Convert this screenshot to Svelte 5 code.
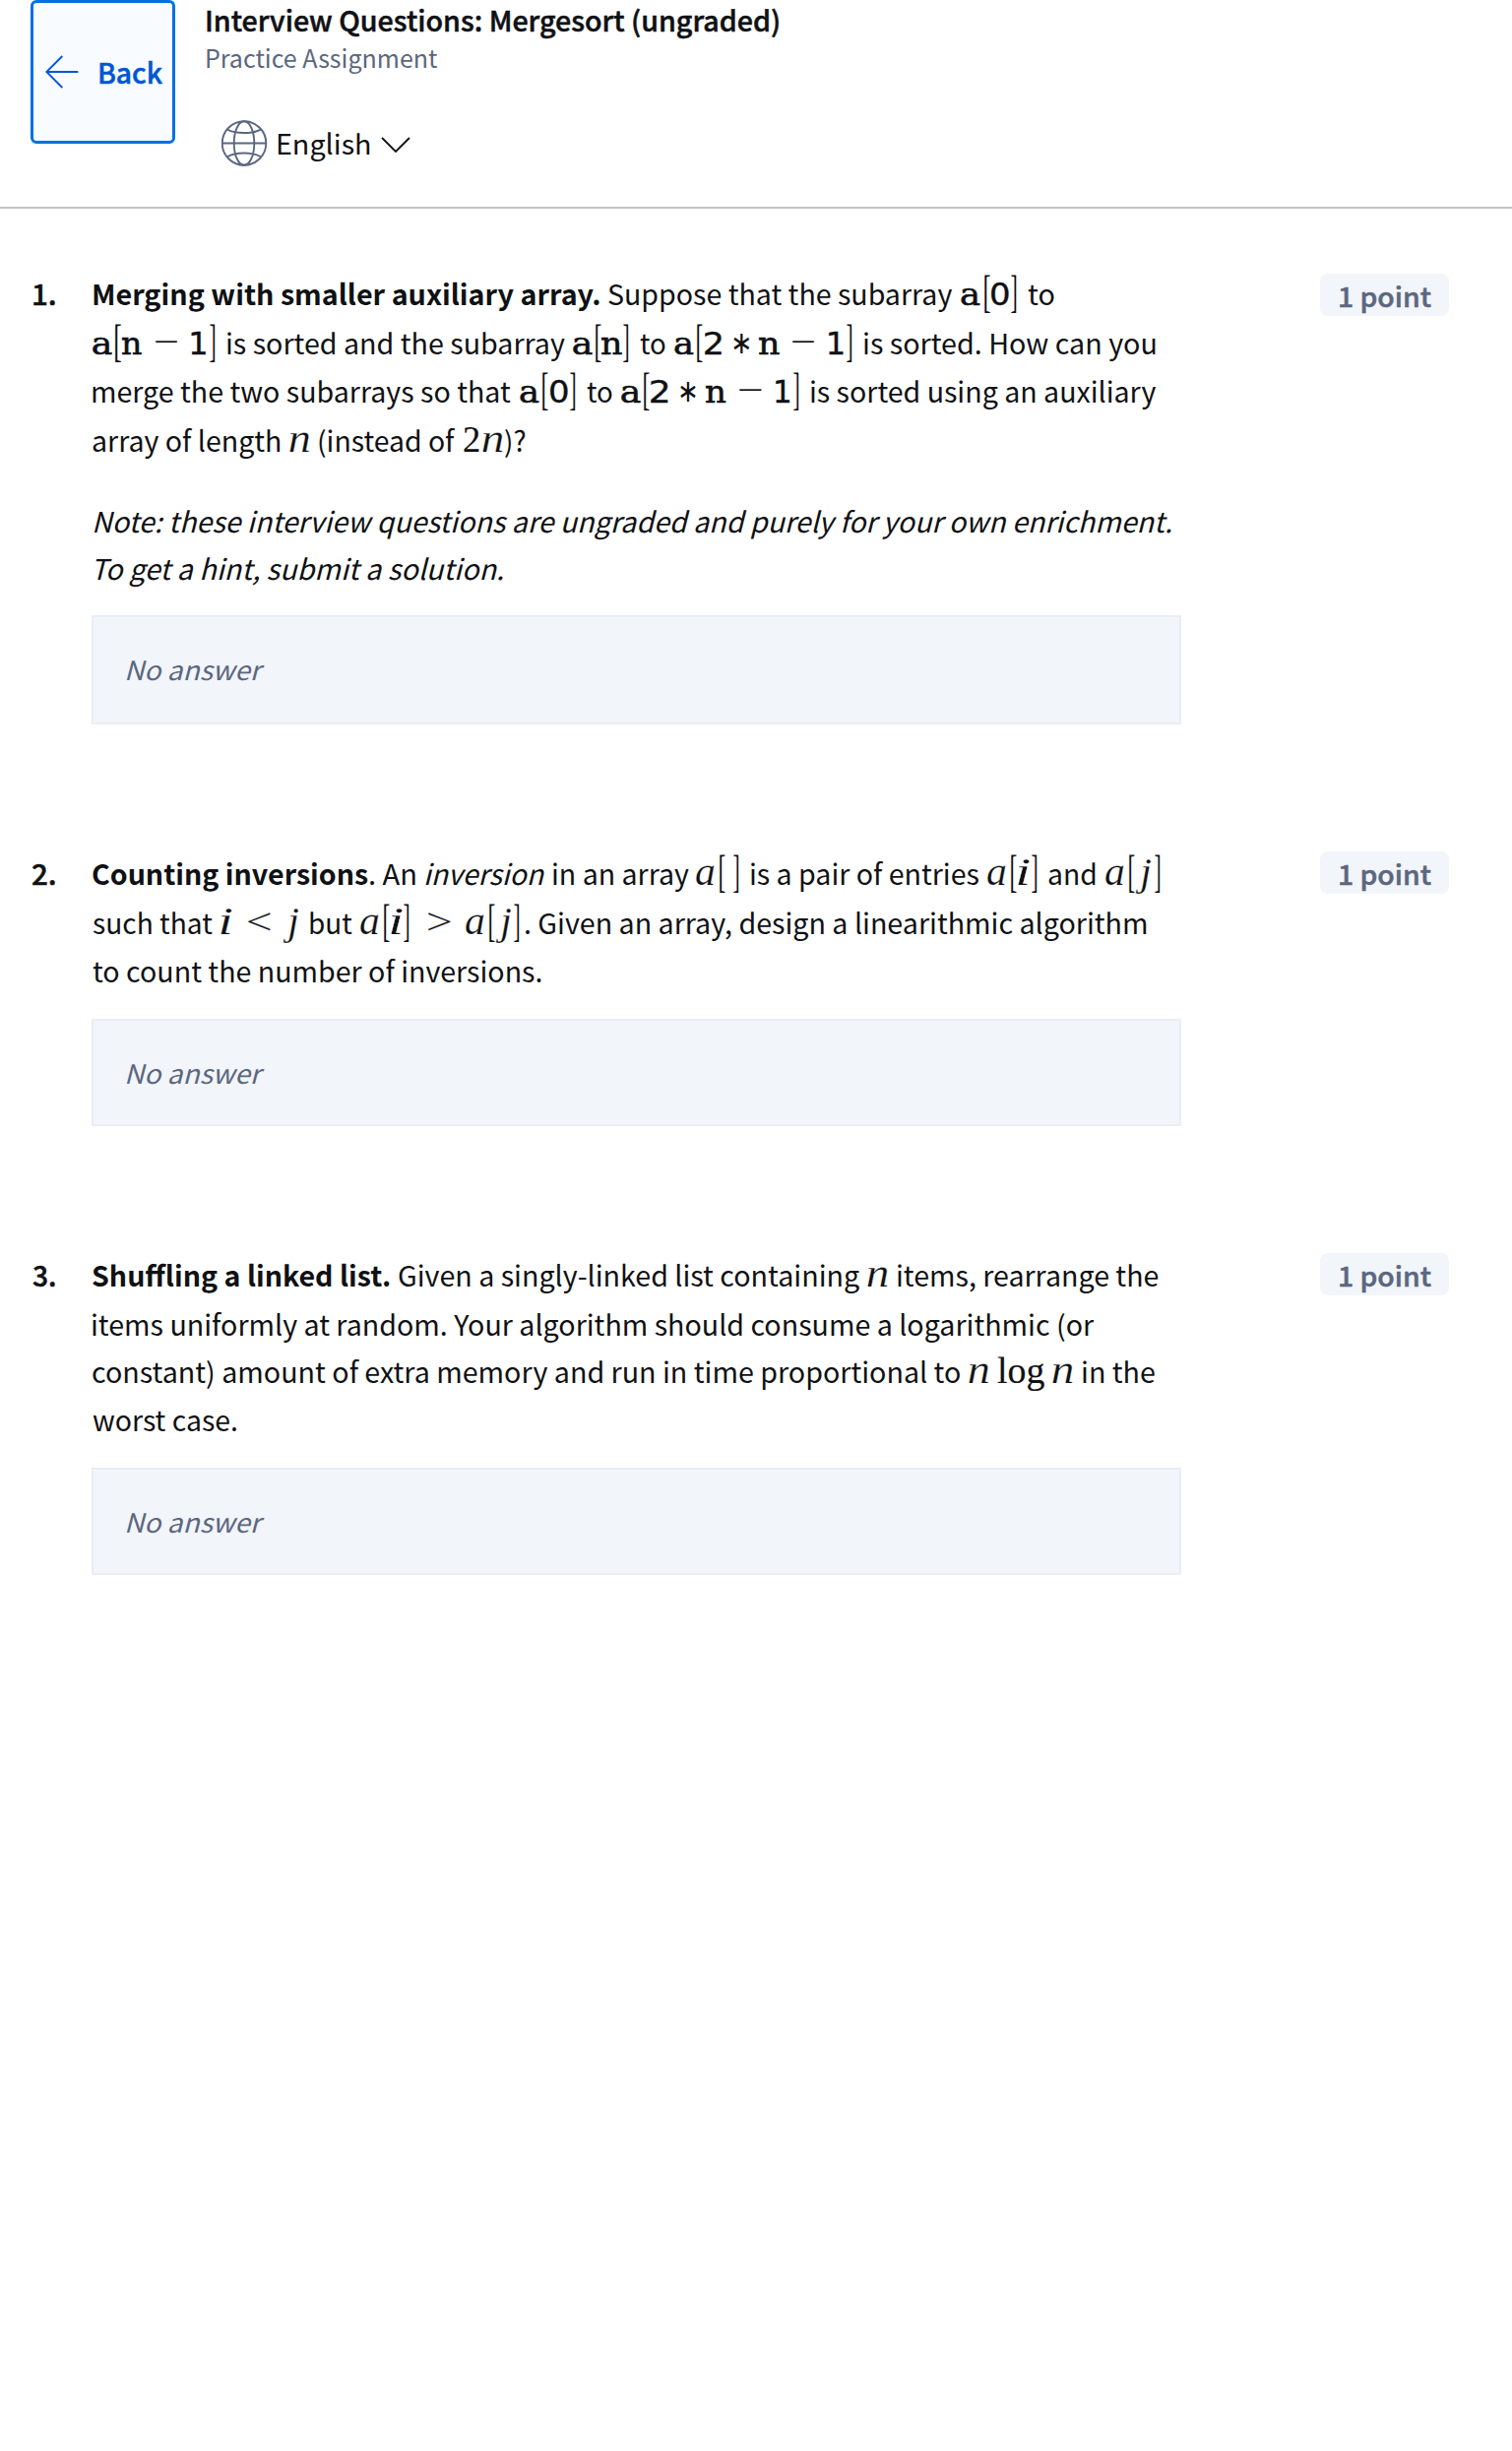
<script>
  // Each line is a run of pieces: [style, left edge, right edge, text].
  const questions = [
    {
      label: ['1.', 33.5, 55.5],
      boxHeight: 111,
      pillTop: 3,
      lines: [
        { h: 50, runs: [
          ['bold', 94.8, 609.2, 'Merging with smaller auxiliary array.'],
          ['text', 618.6, 968, 'Suppose that the subarray'],
          ['tt', 976, 995, 'a'], ['bracket', 1000, 1005.7, '['], ['digit', 1007.5, 1025.5, '0'], ['bracket', 1027, 1032.6, ']'],
          ['text', 1044, 1070.5, 'to'],
        ] },
        { h: 49, runs: [
          ['tt', 94.5, 114, 'a'], ['bracket', 117, 123, '['], ['tt', 124, 144, 'n'], ['op', 157, 180, '−'], ['digit', 194.5, 209.5, '1'], ['bracket', 213, 218.5, ']'],
          ['text', 231, 574, 'is sorted and the subarray'],
          ['tt', 582, 601.5, 'a'], ['bracket', 605.5, 611, '['], ['tt', 611, 632, 'n'], ['bracket', 633, 638.5, ']'],
          ['text', 650, 675.5, 'to'],
          ['tt', 685, 704, 'a'], ['bracket', 708, 713.5, '['], ['digit', 716, 733.5, '2'], ['star', 745, 761, '∗'], ['tt', 771, 792, 'n'], ['op', 804, 827, '−'], ['digit', 842, 857, '1'], ['bracket', 860.5, 866, ']'],
          ['text', 878.5, 1174, 'is sorted. How can you'],
        ] },
        { h: 50, runs: [
          ['text', 94.5, 519.5, 'merge the two subarrays so that'],
          ['tt', 528, 547, 'a'], ['bracket', 551, 556.5, '['], ['digit', 559, 577, '0'], ['bracket', 579, 584.5, ']'],
          ['text', 596, 621.5, 'to'],
          ['tt', 631, 650.5, 'a'], ['bracket', 654, 659.5, '['], ['digit', 661.5, 679.5, '2'], ['star', 691.5, 707, '∗'], ['tt', 717, 737.5, 'n'], ['op', 750, 773.5, '−'], ['digit', 788.5, 803, '1'], ['bracket', 806.5, 812, ']'],
          ['text', 824.8, 1175.3, 'is sorted using an auxiliary'],
        ] },
        { h: 82, runs: [
          ['text', 94, 285, 'array of length'], ['math', 294.5, 315.5, 'n'],
          ['text', 324.5, 463.5, '(instead of'], ['num', 471, 487, '2'], ['math', 490.5, 512, 'n'], ['text', 513.5, 534.5, ')?'],
        ] },
        { h: 48, runs: [['ital', 95.5, 1190.5, 'Note: these interview questions are ungraded and purely for your own enrichment.']] },
        { h: 71, runs: [['ital', 97.5, 511.5, 'To get a hint, submit a solution.']] },
      ],
    },
    {
      label: ['2.', 32.5, 55.5],
      boxHeight: 109,
      pillTop: 1,
      lines: [
        { h: 50, runs: [
          ['bold', 93.8, 373.8, 'Counting inversions'], ['text', 376, 422.5, '. An'], ['ital', 432.5, 554, 'inversion'], ['text', 562, 700, 'in an array'],
          ['math', 707.5, 726.5, 'a'], ['bracket', 731.5, 737, '['], ['bracket', 745.5, 751, ']'],
          ['text', 763.5, 995, 'is a pair of entries'],
          ['math', 1003.5, 1022.5, 'a'], ['bracket', 1027.5, 1033, '['], ['math', 1034.5, 1046.5, 'i'], ['bracket', 1048, 1053.5, ']'],
          ['text', 1065.5, 1113.5, 'and'],
          ['math', 1123, 1142, 'a'], ['bracket', 1147, 1152.5, '['], ['math', 1153, 1170, 'j'], ['bracket', 1173, 1178.5, ']'],
        ] },
        { h: 49, runs: [
          ['text', 94, 216, 'such that'], ['math', 224, 235.5, 'i'], ['op', 251, 274.5, '<'], ['math', 287.5, 304.5, 'j'], ['text', 315, 358, 'but'],
          ['math', 366, 385, 'a'], ['bracket', 390, 395.5, '['], ['math', 397, 409, 'i'], ['bracket', 410.5, 416, ']'], ['op', 434.5, 458, '>'],
          ['math', 473, 492, 'a'], ['bracket', 497, 502.5, '['], ['math', 503, 520, 'j'], ['bracket', 522, 527.5, ']'],
          ['text', 534.5, 1165.5, '. Given an array, design a linearithmic algorithm'],
        ] },
        { h: 72, runs: [['text', 94, 549.5, 'to count the number of inversions.']] },
      ],
    },
    {
      label: ['3.', 32.5, 55.5],
      boxHeight: 109,
      pillTop: 1,
      lines: [
        { h: 50, runs: [
          ['bold', 94, 396, 'Shuffling a linked list.'], ['text', 405.5, 873.5, 'Given a singly-linked list containing'],
          ['math', 881.5, 903, 'n'], ['text', 912.5, 1177, 'items, rearrange the'],
        ] },
        { h: 48, runs: [['text', 94.5, 1112.5, 'items uniformly at random. Your algorithm should consume a logarithmic (or']] },
        { h: 49, runs: [
          ['text', 94, 975, 'constant) amount of extra memory and run in time proportional to'],
          ['math', 984, 1005, 'n'], ['num', 1013, 1061, 'log'], ['math', 1069.5, 1091, 'n'], ['text', 1100.5, 1173.5, 'in the'],
        ] },
        { h: 72, runs: [['text', 94, 240, 'worst case.']] },
      ],
    },
  ];

  // Turns absolute edges into gaps between neighbouring pieces.
  function place(runs, origin) {
    let end = origin;
    return runs.map(([kind, from, to, text]) => {
      const piece = { kind, text, gap: from - end, width: to - from };
      end = to;
      return piece;
    });
  }

  const pen = document.createElement('canvas').getContext('2d');

  // Stretches the glyphs so that their ink fills the piece's width.
  function fit(node, width) {
    const cs = getComputedStyle(node);
    pen.font = `${cs.fontStyle} ${cs.fontWeight} ${cs.fontSize} ${cs.fontFamily}`;
    const m = pen.measureText(node.textContent);
    const scale = width / (m.actualBoundingBoxLeft + m.actualBoundingBoxRight);
    node.style.transform = `translateX(${m.actualBoundingBoxLeft * scale}px) scaleX(${scale})`;
  }
</script>

{#snippet line(runs, origin)}
  {#each place(runs, origin) as p}
    <span class="piece" style="width:{p.width}px;margin-left:{p.gap}px"><span class="ink {p.kind}" use:fit={p.width}>{p.text}</span></span>
  {/each}
{/snippet}

<div class="page">
  <header>
    <button class="back">
      <svg class="arrow" viewBox="0 0 34 34"><path d="M33.3 17H1.5M17.3 1 1.3 17l16 16" /></svg>
      <span class="line back-text">{@render line([['semi', 100.5, 165, 'Back']], 101)}</span>
    </button>
    <div class="heading">
      <h1 class="line title">{@render line([['semi', 209.5, 790.5, 'Interview Questions: Mergesort (ungraded)']], 208)}</h1>
      <div class="line subtitle">{@render line([['sub', 209.5, 444.5, 'Practice Assignment']], 208)}</div>
      <div class="language">
        <svg class="globe" viewBox="0 0 47 48">
          <circle cx="23" cy="23.5" r="22.3" />
          <ellipse cx="23" cy="23.5" rx="10.3" ry="22.3" />
          <path d="M1 23.5h44M6 9.7c8 4.4 26 4.4 34 0M6 37.3c8-5 26-5 34 0" />
        </svg>
        <span class="line lang-text">{@render line([['lang', 281.5, 375, 'English']], 282)}</span>
        <svg class="chevron" viewBox="0 0 30 17"><path d="M1 1l14 14L29 1" /></svg>
      </div>
    </div>
  </header>

  <main>
    {#each questions as q}
      <section>
        <div class="line number">{@render line([['semi', q.label[1], q.label[2], q.label[0]]], 32)}</div>
        <div class="content">
          {#each q.lines as l}
            <div class="line" style="height:{l.h}px">{@render line(l.runs, 93.3)}</div>
          {/each}
          <div class="answer" style="height:{q.boxHeight}px">
            <div class="line">{@render line([['none', 128.5, 270, 'No answer']], 95.4)}</div>
          </div>
        </div>
        <div class="pill" style="margin-top:{q.pillTop}px"><span class="line">{@render line([['points', 1361, 1454, '1 point']], 1341)}</span></div>
      </section>
    {/each}
  </main>
</div>

<style>
  :global(body) { margin: 0; background: #fff; }
  .page {
    width: 1536px;
    height: 2490px;
    overflow: hidden;
    color: #0f1114;
    background: #fff;
    font-family: 'Noto Sans CJK SC', 'Noto Sans', sans-serif;
    font-size: 28.6px;
  }
  header {
    display: flex;
    box-sizing: border-box;
    height: 212px;
    padding-left: 31px;
    border-bottom: 2px solid #c3c3c3;
  }
  .back {
    display: flex;
    box-sizing: border-box;
    width: 147px;
    height: 146px;
    margin: 0 30px 0 0;
    padding: 0 0 0 12px;
    border: 3px solid #0070e0;
    border-radius: 6px;
    background: #f8fbff;
    color: #0056d2;
    font: inherit;
    align-items: flex-start;
  }
  svg { fill: none; flex: none; display: block; }
  .arrow { width: 34px; height: 34px; margin: 52.5px 21px 0 0; stroke: #0056d2; stroke-width: 1.8; }
  .back-text { margin-top: 47px; }
  h1 { margin: 0; font-size: inherit; font-weight: inherit; }

  /* A strut puts every baseline 35px below the line's top. */
  .line { display: flex; align-items: baseline; line-height: 0; white-space: nowrap; }
  .line::before { content: ''; display: inline-block; height: 35px; width: 0; }
  .piece { display: block; flex: none; }
  .ink { display: inline-block; transform-origin: 0 0; }

  .title { margin-top: -3px; height: 37px; }
  .subtitle { height: 88px; }
  .language { display: flex; align-items: flex-start; padding-left: 17px; }
  .globe { width: 47px; height: 48px; stroke: #5b6780; stroke-width: 1.9; margin-right: 10px; }
  .lang-text { width: 105px; }
  .chevron { width: 30px; height: 17px; margin-top: 17px; stroke: #0f1114; stroke-width: 1.8; }

  main { padding: 63px 64px 0 32px; }
  section {
    display: grid;
    grid-template-columns: 61px 1107px 141px 131px;
    justify-content: start;
    margin-bottom: 128px;
  }
  .pill {
    grid-column: 4;
    height: 43px;
    border-radius: 8px;
    background: #f2f5fa;
    color: #5b6780;
  }
  .pill .line { margin-top: -1px; }
  .answer {
    box-sizing: border-box;
    border: 2px solid #e8eef7;
    background: #f2f5fa;
    color: #5b6780;
    padding-top: 29px;
  }

  .bold { font-weight: 700; }
  .semi { font-weight: 500; -webkit-text-stroke: 0.5px currentColor; }
  .points { font-weight: 500; font-size: 27.5px; -webkit-text-stroke: 0.5px currentColor; }
  .ital, .none { font-style: italic; }
  .none { font-size: 27px; }
  .sub { font-size: 25px; color: #5b6780; }
  .lang { font-size: 28px; }
  .tt { font-family: 'DejaVu Serif', serif; font-size: 31.5px; -webkit-text-stroke: 0.6px currentColor; }
  .digit { font-family: 'DejaVu Sans', sans-serif; font-size: 32px; -webkit-text-stroke: 0.4px currentColor; }
  /* A faint stroke in the page's colour thins the math letters. */
  .math { font-family: 'Liberation Serif', serif; font-style: italic; font-size: 39.5px; -webkit-text-stroke: 0.25px #fff; }
  .num { font-family: 'Liberation Serif', serif; font-size: 38.7px; -webkit-text-stroke: 0.2px currentColor; }
  .op { font-family: 'Liberation Serif', serif; font-size: 38.7px; -webkit-text-stroke: 0.15px #fff; }
  .star { font-family: 'Liberation Serif', serif; font-size: 32px; position: relative; top: -1px; }
  .bracket { font-family: 'Liberation Serif', serif; font-size: 47px; position: relative; top: 2px; }
</style>
